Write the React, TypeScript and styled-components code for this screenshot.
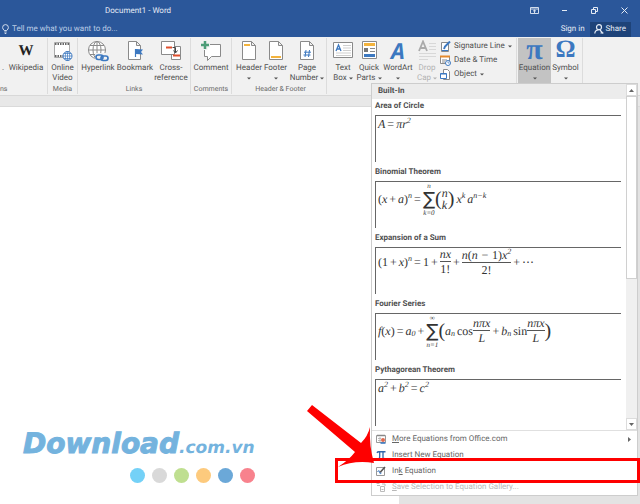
import React from 'react';
import styled, { createGlobalStyle } from 'styled-components';

const Global = createGlobalStyle`
  * { box-sizing: border-box; }
  body { margin: 0; background: #e6e6e6; text-rendering: geometricPrecision; }
  button { font: inherit; color: inherit; background: none; border: 0; padding: 0; margin: 0; cursor: default; text-rendering: inherit; }
  svg { display: block; flex: none; }
`;

const Screen = styled.div`
  position: relative;
  min-height: 100vh;
  display: flex;
  flex-direction: column;
  overflow: hidden;
  font-family: Roboto, "Open Sans", sans-serif;
  font-size: 8px;
  line-height: 10px;
  color: #505050;
`;

/* Title bar */
const TitleBar = styled.header`
  background: #2b579a;
  color: #e4ebf5;
`;
const TitleRow = styled.div`
  display: flex;
  align-items: center;
  justify-content: space-between;
  height: 21px;
  padding: 0 8px 0 105px;
`;
const WindowButtons = styled.div`
  display: flex;
  gap: 14px;
`;
const WindowButton = styled.button`
  width: 16px;
  display: flex;
  justify-content: center;
`;
const TellRow = styled.div`
  display: flex;
  align-items: center;
  height: 16px;
  padding: 0 9px 0 2px;
`;
const TellLabel = styled.label`
  display: flex;
  align-items: center;
  gap: 3px;
  flex: 1;
`;
const TellInput = styled.input`
  width: 180px;
  padding: 0;
  border: 0;
  background: none;
  outline: none;
  font: inherit;
  text-rendering: inherit;
  color: #fff;
  &::placeholder { color: #bccde6; opacity: 1; }
`;
const SignIn = styled.button`
  margin-right: 5px;
`;
const Share = styled.button`
  display: flex;
  align-items: center;
  gap: 2px;
  height: 15px;
  padding: 0 5px 0 4px;
  background: #1e4379;
`;

/* Ribbon */
const Ribbon = styled.nav`
  display: flex;
  height: 59px;
  padding: 1px 0;
  background: #f1f1f1;
  border-bottom: 1px solid #d8d8d8;
`;
const Group = styled.section<{ $pad?: string }>`
  display: flex;
  flex-direction: column;
  justify-content: space-between;
  padding: ${(p) => p.$pad ?? '0'};
  border-right: 1px solid #dcdcdc;
`;
const Tools = styled.div`
  display: flex;
  align-items: stretch;
  height: 45px;
`;
const GroupName = styled.div<{ $left?: boolean }>`
  font-size: 7px;
  color: #6a6a6a;
  text-align: ${(p) => (p.$left ? 'left' : 'center')};
`;
const Tool = styled.button<{ $w: number; $on?: boolean }>`
  width: ${(p) => p.$w}px;
  display: flex;
  flex-direction: column;
  align-items: center;
  white-space: nowrap;
  background: ${(p) => (p.$on ? '#c3c3c3' : 'none')};
  &:disabled { color: #b3b3b3; }
`;
const ToolIcon = styled.span`
  height: 25px;
  display: flex;
  align-items: center;
`;
const ToolLine = styled.span`
  display: flex;
  align-items: center;
  justify-content: center;
  gap: 2px;
  height: 10px;
`;
const Cut = styled.span`
  width: 8px;
  padding: 25px 0 0 2px;
`;
const SmallTools = styled.div`
  display: flex;
  flex-direction: column;
  width: 76px;
  padding-top: 1px;
`;
const SmallTool = styled.button`
  display: flex;
  align-items: center;
  gap: 3px;
  height: 14px;
  white-space: nowrap;
`;
const WikiLetter = styled.b`
  font: bold 15px/20px "Liberation Serif", serif;
  color: #222;
`;
const BigSign = styled.b<{ $size: number }>`
  font: bold ${(p) => p.$size}px/20px "Liberation Serif", serif;
  padding-bottom: 2px;
  color: #3c78c0;
`;
const ArtLetter = styled.b`
  font: italic bold 22px/22px "Open Sans", sans-serif;
  color: #3c78c0;
`;

/* Document */
const Band = styled.div`
  height: 11px;
  background: #e8e8e8;
  border-bottom: 1px solid #dadada;
`;
const Workspace = styled.main`
  flex: 1;
  display: flex;
  background: #e3e3e3;
`;
const Paper = styled.div`
  flex: 1;
  display: flex;
  flex-direction: column;
  background: #fff;
`;
const Gutter = styled.div`
  width: 1%;
`;
const Desk = styled.div`
  height: 9px;
  margin: auto 0 0 63%;
  background: #e3e3e3;
`;

/* Equation menu */
const Menu = styled.div`
  position: absolute;
  top: 83px;
  right: 2px;
  width: 267px;
  background: #fff;
  border: 1px solid #cdcdcd;
`;
const Gallery = styled.div`
  display: flex;
  border-bottom: 1px solid #e0e0e0;
`;
const Entries = styled.div`
  flex: 1;
  padding-bottom: 1px;
`;
const Heading = styled.div`
  height: 15px;
  padding: 2px 0 0 6px;
  font-weight: bold;
  background: #ececec;
`;
const Entry = styled.button`
  display: block;
  width: 100%;
  height: 66px;
  padding: 2px 5px 3px 3px;
  text-align: left;
`;
const EntryName = styled.div`
  font-weight: bold;
  height: 14px;
`;
const Preview = styled.div`
  height: 47px;
  padding-left: 2px;
  border-left: 1px solid #666;
  border-top: 1px solid #666;
`;
const Scrollbar = styled.div`
  width: 11px;
  display: flex;
  flex-direction: column;
  background: #f0f0f0;
`;
const ScrollButton = styled.button`
  display: flex;
  align-items: center;
  justify-content: center;
  height: 12px;
  background: #fff;
  border: 1px solid #dcdcdc;
`;
const Thumb = styled.div`
  height: 183px;
  background: #fff;
  border: 1px solid #d0d0d0;
`;
const Spring = styled.div`
  flex: 1;
`;
const Command = styled.button`
  display: flex;
  align-items: center;
  gap: 6px;
  width: 100%;
  height: 16px;
  padding: 0 6px 0 4px;
  color: #666;
  text-align: left;
  &:disabled { color: #b8b8b8; }
`;
const CommandName = styled.span`
  flex: 1;
`;

/* Formulas */
const Formula = styled.div<{ $h: number }>`
  display: flex;
  align-items: center;
  height: ${(p) => p.$h}px;
  font: italic 12px/12px "Liberation Serif", serif;
  color: #333;
  white-space: nowrap;
`;
const Up = styled.span`
  font-size: 8px;
  line-height: 8px;
  vertical-align: super;
  padding-bottom: 6px;
`;
const Low = styled.span`
  font-size: 8px;
  line-height: 8px;
  padding-top: 6px;
`;
const Op = styled.span`
  font-style: normal;
  padding: 0 2px;
`;
const Rm = styled.span`
  font-style: normal;
`;
const Stack = styled.span`
  display: flex;
  flex-direction: column;
  align-items: center;
  font-size: 7px;
  line-height: 8px;
`;
const Sigma = styled.span`
  font: 18px/19px "DejaVu Sans", sans-serif;
`;
const Paren = styled.span`
  font: 20px/24px "Liberation Serif", serif;
`;
const Fraction = styled.span`
  display: flex;
  flex-direction: column;
  text-align: center;
`;
const Over = styled.span`
  border-bottom: 1px solid #555;
  line-height: 13px;
`;
const Under = styled.span`
  line-height: 14px;
`;
const Pair = styled.span`
  display: flex;
  flex-direction: column;
  line-height: 12px;
`;
const Space = styled.span`
  width: 2px;
`;

/* Overlays */
const Highlight = styled.div`
  position: absolute;
  top: 458px;
  right: 0;
  width: 305px;
  height: 25px;
  border: 3px solid #fe0000;
  pointer-events: none;
`;
const Pointer = styled.svg`
  position: absolute;
  top: 400px;
  right: 260px;
  pointer-events: none;
`;
const Watermark = styled.div`
  position: absolute;
  top: 428px;
  left: 23px;
  display: flex;
  flex-direction: column;
  align-items: flex-end;
  gap: 4px;
`;
const Brand = styled.div`
  font: italic bold 28px/32px "DejaVu Sans", sans-serif;
  color: #74b3de;
  -webkit-text-stroke: 1px #74b3de;
`;
const Domain = styled.span`
  font-size: 17px;
  -webkit-text-stroke: 0;
`;
const Dots = styled.div`
  display: flex;
  gap: 7px;
`;
const Dot = styled.span<{ $c: string }>`
  width: 15px;
  height: 15px;
  border-radius: 50%;
  background: ${(p) => p.$c};
`;

const Caret = () => (
  <svg width="4" height="3" viewBox="0 0 4 3"><path d="M0 .5h4L2 2.500z" fill="currentColor" /></svg>
);

const blue = '#3c78c0';
const line = '#8a8a8a';
const amber = '#f3b33d';

const PageShape = () => <path d="M4.500 1.500h9l4 4v14h-13zM13.500 1.500v4h4" fill="#fff" stroke={line} />;

const VideoIcon = () => (
  <svg width="20" height="22" viewBox="0 0 20 22" fill="none">
    <path d="M1.500 2.500h15v15h-15z" fill="#fff" stroke="#aaa" />
    <path d="M2 4h14M2 16h9" stroke="#666" strokeWidth="2" strokeDasharray="1.500 1" />
    <circle cx="14.500" cy="16" r="4.500" fill="#fff" stroke={blue} />
    <path d="M10 16h9M14.500 11.500v9M11 13.500h7M11 18.500h7" stroke={blue} strokeWidth=".7" />
    <ellipse cx="14.500" cy="16" rx="2.200" ry="4.500" stroke={blue} strokeWidth=".7" />
  </svg>
);
const HyperlinkIcon = () => (
  <svg width="22" height="22" viewBox="0 0 22 22" fill="none" stroke={line}>
    <circle cx="10" cy="10" r="8.500" fill="#fff" />
    <ellipse cx="10" cy="10" rx="4" ry="8.500" />
    <path d="M1.500 10h17M10 1.500v17M3 5.500h14M3 14.500h14" />
    <path d="M8 13h14v8H8z" fill="#f1f1f1" stroke="none" />
    <g stroke={blue} strokeWidth="1.700"><rect x="9" y="15" width="7" height="4.500" rx="2.200" /><rect x="14" y="16" width="7" height="4.500" rx="2.200" /></g>
  </svg>
);
const BookmarkIcon = () => (
  <svg width="20" height="22" viewBox="0 0 20 22" fill="none">
    <path d="M3.500 1.500h8l4 4v14h-12zM11.500 1.500v4h4" fill="#fff" stroke={line} />
    <path d="M10.500 9v8" stroke={blue} strokeWidth="1.200" /><path d="M11 9l7 .5-2 2.500 2 2.500-7-.5z" fill={blue} />
  </svg>
);
const CrossIcon = () => (
  <svg width="22" height="22" viewBox="0 0 22 22" fill="none">
    <path d="M11.500 6.500h9v13h-9z" fill="#fff" stroke={line} />
    <path d="M1.500 1.500h13v13h-13z" fill="#fff" stroke={line} />
    <path d="M6 7.500h6M13 15.500h7" stroke="#e0502e" strokeWidth="1.800" />
    <path d="M12.500 7.500h3v5M13.500 10.500l2 2.500 2-2.500" stroke="#444" />
  </svg>
);
const CommentIcon = () => (
  <svg width="22" height="22" viewBox="0 0 22 22" fill="none">
    <path d="M4.500 4.500h16v12h-9l-4 4v-4h-3z" fill="#fff" stroke={line} />
    <path d="M5 0v10M0 5h10" stroke="#f1f1f1" strokeWidth="5" /><path d="M5 1v8M1 5h8" stroke="#4d9d78" strokeWidth="2.500" />
  </svg>
);
const HeaderIcon = () => (
  <svg width="22" height="22" viewBox="0 0 22 22" fill="none"><PageShape /><path d="M6 5h6" stroke={amber} strokeWidth="2" /></svg>
);
const FooterIcon = () => (
  <svg width="22" height="22" viewBox="0 0 22 22" fill="none"><PageShape /><path d="M6 17h10" stroke={amber} strokeWidth="2" /></svg>
);
const NumberIcon = () => (
  <svg width="22" height="22" viewBox="0 0 22 22" fill="none"><PageShape /><path d="M10 10l-1 7M13.500 10l-1 7M8 12.200h7M7.500 15h7" stroke={blue} /></svg>
);
const TextBoxIcon = () => (
  <svg width="20" height="22" viewBox="0 0 20 22" fill="none">
    <path d="M.5 2.500h19v15h-19z" fill="#fff" stroke={line} />
    <path d="M3 11l2.500-6L8 11M4 9h3" stroke={blue} strokeWidth="1.300" />
    <path d="M10 5.500h8M10 8h8M10 10.500h8M3 13h15M3 15.500h15" stroke="#cfcfcf" />
  </svg>
);
const QuickIcon = () => (
  <svg width="18" height="22" viewBox="0 0 18 22" fill="none">
    <path d="M2.500 1.500h14v17h-14z" fill="#fff" stroke={line} />
    <path d="M4 4.500h11" stroke={amber} strokeWidth="3" /><path d="M4 8h4v4H4z" fill="#777" />
    <path d="M10 8.500h5M10 11.500h5" stroke={line} /><path d="M4 15.500h11" stroke={blue} strokeWidth="3" />
  </svg>
);
const DropCapIcon = () => (
  <svg width="20" height="22" viewBox="0 0 20 22" fill="none">
    <path d="M2 11L6 1.500 10 11M3.500 8h5" stroke="#aaa" strokeWidth="1.800" />
    <path d="M12 3.500h7M12 6.500h7M12 9.500h7M2 13.500h17M2 16.500h17M2 19.500h9" stroke="#d8d8d8" />
  </svg>
);
const SignatureIcon = () => (
  <svg width="11" height="11" viewBox="0 0 11 11" fill="none">
    <path d="M1.500 1.500h7v9h-7z" fill="#fff" stroke={line} /><path d="M4 8l1-2.500L10 .5" stroke={blue} strokeWidth="2" /><path d="M2 9.500h6" stroke={blue} />
  </svg>
);
const DateIcon = () => (
  <svg width="11" height="11" viewBox="0 0 11 11" fill="none">
    <path d="M.5 1.500h9v7h-9z" fill="#fff" stroke={line} /><path d="M0 1.500h10" stroke="#e58a2c" strokeWidth="2" /><path d="M2 5h5M2 7h3" stroke={line} />
    <circle cx="8" cy="8" r="2.500" fill="#fff" stroke={blue} /><path d="M8 6.500V8h1.500" stroke={blue} strokeWidth=".7" />
  </svg>
);
const ObjectIcon = () => (
  <svg width="11" height="11" viewBox="0 0 11 11" fill="none">
    <path d="M3.500.5h4l2 2v8h-6z" fill="#fff" stroke={line} /><path d="M.5 4.500h6v5h-6z" fill="#fff" stroke={blue} /><path d="M.5 5h6" stroke={blue} />
  </svg>
);
const OfficeIcon = () => (
  <svg width="10" height="10" viewBox="0 0 10 10" fill="none">
    <path d="M.5 1.500h9v7h-9z" fill="#fff" stroke="#999" /><path d="M1 1.500h8" stroke="#888" strokeWidth="1.500" /><path d="M2 4.500h3M2 6.500h3M4 3v5" stroke="#bbb" />
    <circle cx="7" cy="6" r="2" fill="#e0694f" /><path d="M4.500 9h5" stroke={blue} strokeWidth="1.600" />
  </svg>
);
const PiIcon = () => (
  <svg width="10" height="10" viewBox="0 0 10 10" fill="none" stroke="#2f66ab">
    <path d="M1 2.800Q1.500 1.800 3 1.800h6.500" strokeWidth="1.500" /><path d="M3.700 2v4.500Q3.700 9 1.800 8.800M7 2v5.500Q7 9 9 8.500" strokeWidth="1.300" />
  </svg>
);
const InkIcon = () => (
  <svg width="10" height="10" viewBox="0 0 10 10" fill="none">
    <path d="M.5 1.500h8v8h-8z" fill="#fff" stroke="#999" /><path d="M4 6.500L9 1" stroke="#555" strokeWidth="1.600" /><path d="M1.500 6q1.500-3 2 0t2 1" stroke={blue} />
  </svg>
);
const SaveIcon = () => (
  <svg width="10" height="10" viewBox="0 0 10 10" fill="none" stroke="#bbb">
    <path d="M.5 1.500h3M1 3.500h3M4.500 4.500h4v5h-4zM6 2h3v2" /><path d="M5.500 7.500h2" />
  </svg>
);

type ToolProps = { w: number; icon: React.ReactNode; lines: string[]; menu?: boolean; on?: boolean; disabled?: boolean };

function RibbonTool({ w, icon, lines, menu, on, disabled }: ToolProps) {
  const alone = menu && lines.length === 1;
  return (
    <Tool $w={w} $on={on} disabled={disabled}>
      <ToolIcon>{icon}</ToolIcon>
      {lines.map((text, i) => (
        <ToolLine key={text}>
          {text}
          {menu && !alone && i === lines.length - 1 && <Caret />}
        </ToolLine>
      ))}
      {alone && <ToolLine><Caret /></ToolLine>}
    </Tool>
  );
}

function EquationEntry({ name, h, children }: { name: string; h: number; children: React.ReactNode }) {
  return (
    <Entry>
      <EntryName>{name}</EntryName>
      <Preview><Formula $h={h}>{children}</Formula></Preview>
    </Entry>
  );
}

const dots = ['#74d1f7', '#d9d9d9', '#bfdf90', '#fdca7d', '#6ba8d8', '#f8828d'];

export default function App() {
  return (
    <Screen>
      <Global />
      <TitleBar>
        <TitleRow>
          <span>Document1 - Word</span>
          <WindowButtons>
            <WindowButton aria-label="Ribbon display options">
              <svg width="9" height="7" viewBox="0 0 9 7" fill="none" stroke="currentColor"><path d="M.5.5h8v6h-8zM.5 2h8M4.500 6V3M3 4.300L4.500 3 6 4.300" strokeWidth=".9" /></svg>
            </WindowButton>
            <WindowButton aria-label="Minimize">
              <svg width="7" height="7" viewBox="0 0 7 7"><path d="M1 3.500h5" stroke="currentColor" /></svg>
            </WindowButton>
            <WindowButton aria-label="Restore">
              <svg width="7" height="7" viewBox="0 0 7 7" fill="none" stroke="currentColor"><path d="M.5 2.500h4v4h-4zM2.500 2V.5h4v4H5" /></svg>
            </WindowButton>
            <WindowButton aria-label="Close">
              <svg width="7" height="7" viewBox="0 0 7 7"><path d="M.5.5l6 6M6.500.5l-6 6" stroke="currentColor" /></svg>
            </WindowButton>
          </WindowButtons>
        </TitleRow>
        <TellRow>
          <TellLabel>
            <svg width="7" height="10" viewBox="0 0 7 10" fill="none" stroke="currentColor"><path d="M2.300 6.500Q.6 5 .6 3.500a2.900 2.900 0 0 1 5.800 0Q6.400 5 4.700 6.500zM2.300 8h2.400M2.700 9.500h1.600" strokeWidth=".9" /></svg>
            <TellInput aria-label="Tell me" placeholder="Tell me what you want to do..." />
          </TellLabel>
          <SignIn>Sign in</SignIn>
          <Share>
            <svg width="10" height="10" viewBox="0 0 10 10" fill="none" stroke="currentColor" strokeWidth="1.200"><circle cx="5" cy="3.200" r="2.500" /><path d="M.8 9.500Q1 6 4.500 5.800M6 6l3 3.500M6.500 9h3" /></svg>
            Share
          </Share>
        </TellRow>
      </TitleBar>

      <Ribbon>
        <Group $pad="0 3px 0 0">
          <Tools>
            <Cut>.</Cut>
            <RibbonTool w={36} icon={<WikiLetter>W</WikiLetter>} lines={['Wikipedia']} />
          </Tools>
          <GroupName $left>ns</GroupName>
        </Group>
        <Group>
          <Tools><RibbonTool w={29} icon={<VideoIcon />} lines={['Online', 'Video']} /></Tools>
          <GroupName>Media</GroupName>
        </Group>
        <Group $pad="0 2px">
          <Tools>
            <RibbonTool w={36} icon={<HyperlinkIcon />} lines={['Hyperlink']} />
            <RibbonTool w={38} icon={<BookmarkIcon />} lines={['Bookmark']} />
            <RibbonTool w={34} icon={<CrossIcon />} lines={['Cross-', 'reference']} />
          </Tools>
          <GroupName>Links</GroupName>
        </Group>
        <Group>
          <Tools><RibbonTool w={40} icon={<CommentIcon />} lines={['Comment']} /></Tools>
          <GroupName>Comments</GroupName>
        </Group>
        <Group $pad="0 1px 0 4px">
          <Tools>
            <RibbonTool w={26} icon={<HeaderIcon />} lines={['Header']} menu />
            <RibbonTool w={27} icon={<FooterIcon />} lines={['Footer']} menu />
            <RibbonTool w={36} icon={<NumberIcon />} lines={['Page', 'Number']} menu />
          </Tools>
          <GroupName>Header &amp; Footer</GroupName>
        </Group>
        <Group $pad="0 0 0 3px">
          <Tools>
            <RibbonTool w={26} icon={<TextBoxIcon />} lines={['Text', 'Box']} menu />
            <RibbonTool w={26} icon={<QuickIcon />} lines={['Quick', 'Parts']} menu />
            <RibbonTool w={32} icon={<ArtLetter>A</ArtLetter>} lines={['WordArt']} menu />
            <RibbonTool w={26} icon={<DropCapIcon />} lines={['Drop', 'Cap']} menu disabled />
            <SmallTools>
              <SmallTool><SignatureIcon /> Signature Line <Caret /></SmallTool>
              <SmallTool><DateIcon /> Date &amp; Time</SmallTool>
              <SmallTool><ObjectIcon /> Object <Caret /></SmallTool>
            </SmallTools>
          </Tools>
        </Group>
        <Group $pad="0 2px 0 1px">
          <Tools>
            <RibbonTool w={33} icon={<BigSign $size={30}>π</BigSign>} lines={['Equation']} menu on />
            <RibbonTool w={29} icon={<BigSign $size={25}>Ω</BigSign>} lines={['Symbol']} menu />
          </Tools>
        </Group>
      </Ribbon>

      <Band />
      <Workspace>
        <Paper><Desk /></Paper>
        <Gutter />
      </Workspace>

      <Watermark>
        <Brand>Download<Domain>.com.vn</Domain></Brand>
        <Dots>{dots.map((c) => <Dot key={c} $c={c} />)}</Dots>
      </Watermark>

      <Menu>
        <Gallery>
          <Entries>
            <Heading>Built-In</Heading>
            <EquationEntry name="Area of Circle" h={16}>
              A<Op>=</Op>πr<Up>2</Up>
            </EquationEntry>
            <EquationEntry name="Binomial Theorem" h={34}>
              <Rm>(</Rm>x<Op>+</Op>a<Rm>)</Rm><Up>n</Up><Op>=</Op>
              <Stack><span>n</span><Sigma>∑</Sigma><span>k=0</span></Stack>
              <Paren>(</Paren><Pair><span>n</span><span>k</span></Pair><Paren>)</Paren>
              <Space />x<Up>k</Up><Space />a<Up>n−k</Up>
            </EquationEntry>
            <EquationEntry name="Expansion of a Sum" h={28}>
              <Rm>(1</Rm><Op>+</Op>x<Rm>)</Rm><Up>n</Up><Op>=</Op><Rm>1</Rm><Op>+</Op>
              <Fraction><Over>nx</Over><Under><Rm>1!</Rm></Under></Fraction><Op>+</Op>
              <Fraction><Over>n<Rm>(</Rm>n − <Rm>1)</Rm>x<Up>2</Up></Over><Under><Rm>2!</Rm></Under></Fraction>
              <Op>+</Op><Rm>⋯</Rm>
            </EquationEntry>
            <EquationEntry name="Fourier Series" h={34}>
              f<Rm>(</Rm>x<Rm>)</Rm><Op>=</Op>a<Low>0</Low><Op>+</Op>
              <Stack><span>∞</span><Sigma>∑</Sigma><span>n=1</span></Stack>
              <Paren>(</Paren>a<Low>n</Low><Space /><Rm>cos</Rm>
              <Fraction><Over>nπx</Over><Under>L</Under></Fraction><Op>+</Op>
              b<Low>n</Low><Space /><Rm>sin</Rm>
              <Fraction><Over>nπx</Over><Under>L</Under></Fraction><Paren>)</Paren>
            </EquationEntry>
            <EquationEntry name="Pythagorean Theorem" h={16}>
              a<Up>2</Up><Op>+</Op>b<Up>2</Up><Op>=</Op>c<Up>2</Up>
            </EquationEntry>
          </Entries>
          <Scrollbar>
            <ScrollButton aria-label="Scroll up"><svg width="5" height="3" viewBox="0 0 5 3"><path d="M0 3h5L2.500 0z" fill="#666" /></svg></ScrollButton>
            <Thumb />
            <Spring />
            <ScrollButton aria-label="Scroll down"><svg width="5" height="3" viewBox="0 0 5 3"><path d="M0 0h5L2.500 3z" fill="#666" /></svg></ScrollButton>
          </Scrollbar>
        </Gallery>
        <Command>
          <OfficeIcon /><CommandName><u>M</u>ore Equations from Office.com</CommandName>
          <svg width="3" height="5" viewBox="0 0 3 5"><path d="M0 0v5l3-2.500z" fill="#666" /></svg>
        </Command>
        <Command><PiIcon /><CommandName><u>I</u>nsert New Equation</CommandName></Command>
        <Command><InkIcon /><CommandName>In<u>k</u> Equation</CommandName></Command>
        <Command disabled><SaveIcon /><CommandName><u>S</u>ave Selection to Equation Gallery...</CommandName></Command>
      </Menu>

      <Highlight />
      <Pointer width="80" height="70" viewBox="0 0 80 70">
        <path d="M12 5L61 43Q68 36 70 27Q69 46 74 63Q54 60 38 67Q49 60 55 52L7 11z" fill="#fe0000" />
      </Pointer>
    </Screen>
  );
}
